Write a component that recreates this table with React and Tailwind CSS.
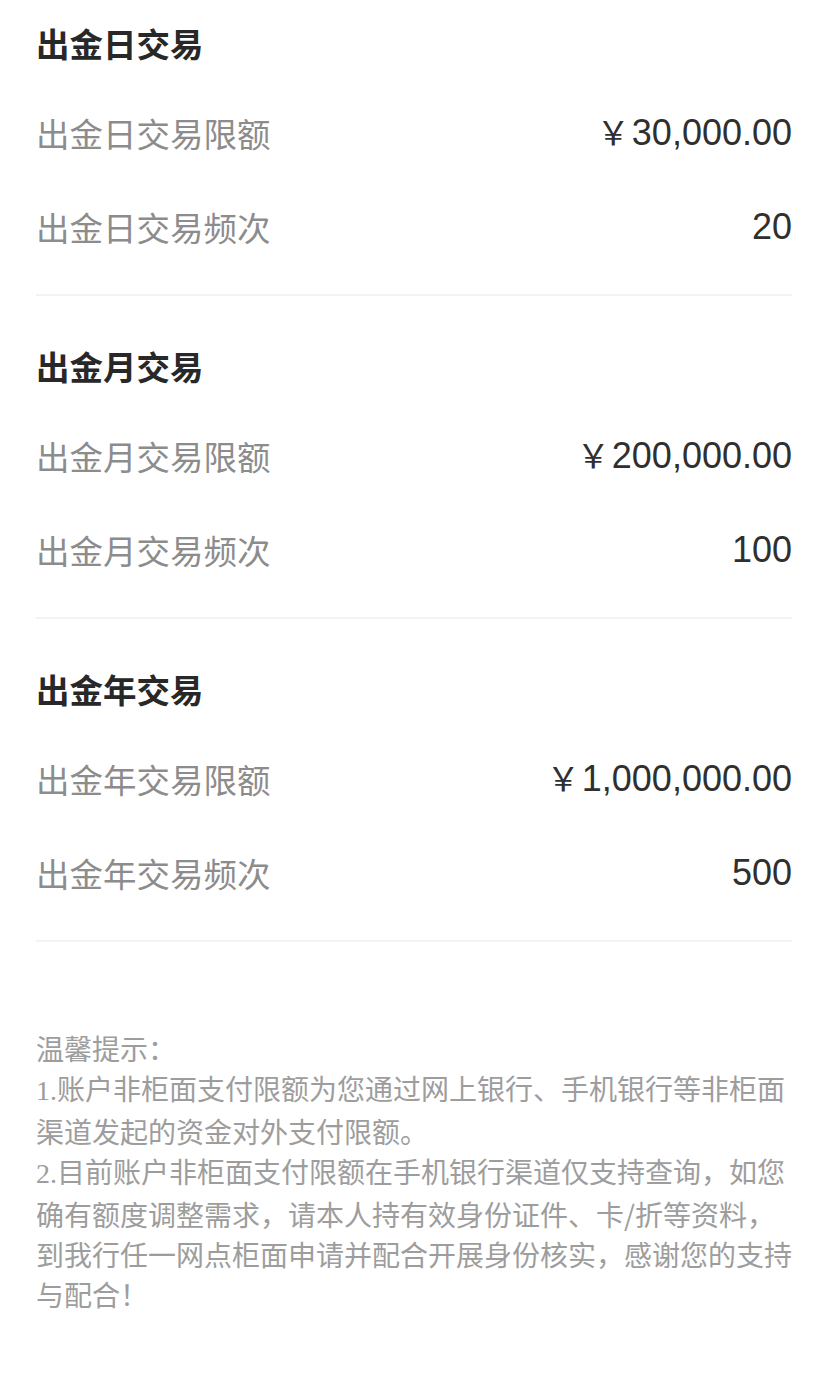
import React from "react";

const sections = [
  {
    title: "出金日交易",
    rows: [
      { label: "出金日交易限额", value: "30,000.00", money: true },
      { label: "出金日交易频次", value: "20" },
    ],
  },
  {
    title: "出金月交易",
    rows: [
      { label: "出金月交易限额", value: "200,000.00", money: true },
      { label: "出金月交易频次", value: "100" },
    ],
  },
  {
    title: "出金年交易",
    rows: [
      { label: "出金年交易限额", value: "1,000,000.00", money: true },
      { label: "出金年交易频次", value: "500" },
    ],
  },
];

const cjk = "font-['Noto_Sans_CJK_SC',sans-serif]";

function Num({ children }) {
  return <span className="font-['Liberation_Serif','Noto_Sans_CJK_SC',serif]">{children}</span>;
}

export default function App() {
  return (
    <div className={`min-h-[1374px] bg-white px-[36px] ${cjk}`}>
      {/* ===== Limit sections ===== */}
      {sections.map((s, i) => (
        <div
          key={s.title}
          className={`border-b-2 border-[#f3f3f3] pb-[20px] ${i > 0 ? "pt-[27px]" : ""}`}
        >
          <div className="flex h-[86px] items-center text-[33.5px] font-bold text-[#282828]">
            {s.title}
          </div>
          {s.rows.map((r) => (
            <div key={r.label} className="flex h-[94px] items-center justify-between">
              <span className="text-[33.5px] text-[#8c8c8c]">{r.label}</span>
              <span className="flex items-baseline text-[36px] leading-none text-[#2f2f2f]">
                {r.money && <span className="mr-[2px] text-[33px]">￥</span>}
                <span className="font-['Liberation_Sans',sans-serif]">{r.value}</span>
              </span>
            </div>
          ))}
        </div>
      ))}

      {/* ===== Tips ===== */}
      <div className="mt-[86px] text-[28px] leading-[40px] text-[#9d9d9d] whitespace-nowrap">
        <div>温馨提示：</div>
        <div>
          <Num>1.</Num>账户非柜面支付限额为您通过网上银行、手机银行等非柜面
        </div>
        <div>渠道发起的资金对外支付限额。</div>
        <div>
          <Num>2.</Num>目前账户非柜面支付限额在手机银行渠道仅支持查询，如您
        </div>
        <div>确有额度调整需求，请本人持有效身份证件、卡/折等资料，</div>
        <div>到我行任一网点柜面申请并配合开展身份核实，感谢您的支持</div>
        <div>与配合！</div>
      </div>
    </div>
  );
}
